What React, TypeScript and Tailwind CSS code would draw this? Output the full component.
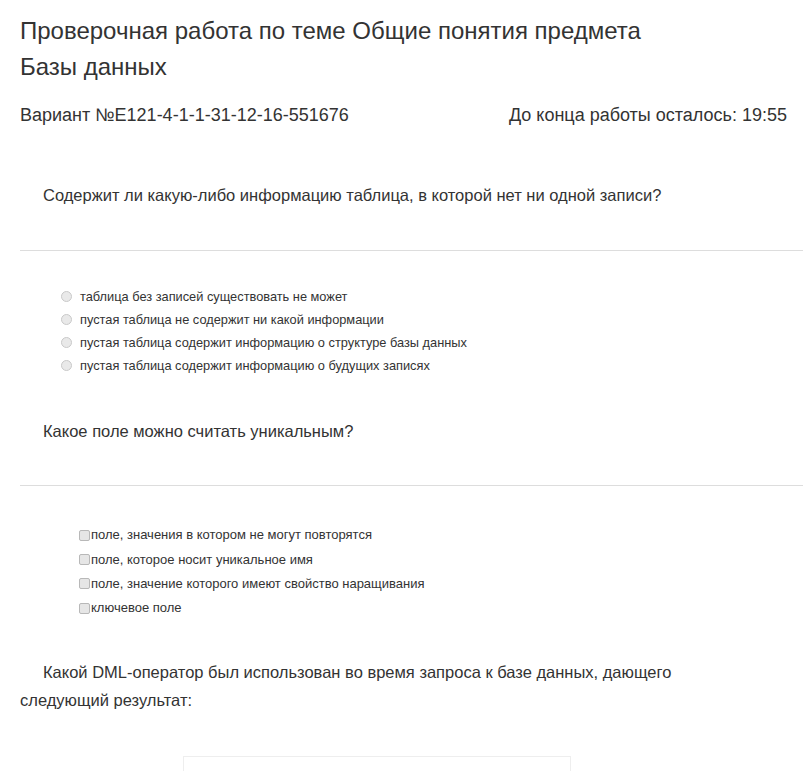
const radios = [
  "таблица без записей существовать не может",
  "пустая таблица не содержит ни какой информации",
  "пустая таблица содержит информацию о структуре базы данных",
  "пустая таблица содержит информацию о будущих записях",
];

const checks = [
  "поле, значения в котором не могут повторятся",
  "поле, которое носит уникальное имя",
  "поле, значение которого имеют свойство наращивания",
  "ключевое поле",
];

const Radio = () => (
  <span className="inline-block h-[11px] w-[11px] rounded-full border border-[#c9c9c9] bg-[#e9e9e9]" />
);

const Check = () => (
  <span className="inline-block h-[11px] w-[11px] rounded-[2px] border border-[#b8b8b8] bg-[#e6e6e6]" />
);

export default function App() {
  return (
    <div
      className="min-h-[771px] overflow-hidden bg-white text-[#333]"
      style={{ fontFamily: '"Liberation Sans", Arial, sans-serif' }}
    >
      <h3 className="pl-5 pr-4 pt-[13px] text-[24px] leading-[36px]">
        Проверочная работа по теме Общие понятия предмета
        <br />
        Базы данных
      </h3>

      <div className="mt-[18px] flex justify-between pl-5 pr-4 text-[18px] leading-6">
        <span>Вариант №E121-4-1-1-31-12-16-551676</span>
        <span>До конца работы осталось: 19:55</span>
      </div>

      <p className="mt-[56px] pl-5 indent-[23px] text-[16.5px] leading-6">
        Содержит ли какую-либо информацию таблица, в которой нет ни одной записи?
      </p>
      <div className="ml-5 mt-[43px] border-t border-[#ddd]" />

      <div className="mt-[34px] flex flex-col">
        {radios.map((r) => (
          <label key={r} className="flex h-[23px] items-center pl-[61px] text-[12.8px]">
            <Radio />
            <span className="ml-[8px]">{r}</span>
          </label>
        ))}
      </div>

      <p className="mt-[42px] pl-5 indent-[23px] text-[16.5px] leading-6">
        Какое поле можно считать уникальным?
      </p>
      <div className="ml-5 mt-[42px] border-t border-[#ddd]" />

      <div className="mt-[37px] flex flex-col">
        {checks.map((c) => (
          <label key={c} className="flex h-[24.3px] items-center pl-[79px] text-[13px]">
            <Check />
            <span className="ml-[1px]">{c}</span>
          </label>
        ))}
      </div>

      <p className="mt-[38px] pl-5 pr-[110px] indent-[23px] text-[16.5px] leading-[28px]">
        Какой DML-оператор был использован во время запроса к базе данных, дающего следующий результат:
      </p>

      <div className="ml-[183px] mt-[42px] h-[60px] w-[388px] border border-[#eee]" />
    </div>
  );
}
